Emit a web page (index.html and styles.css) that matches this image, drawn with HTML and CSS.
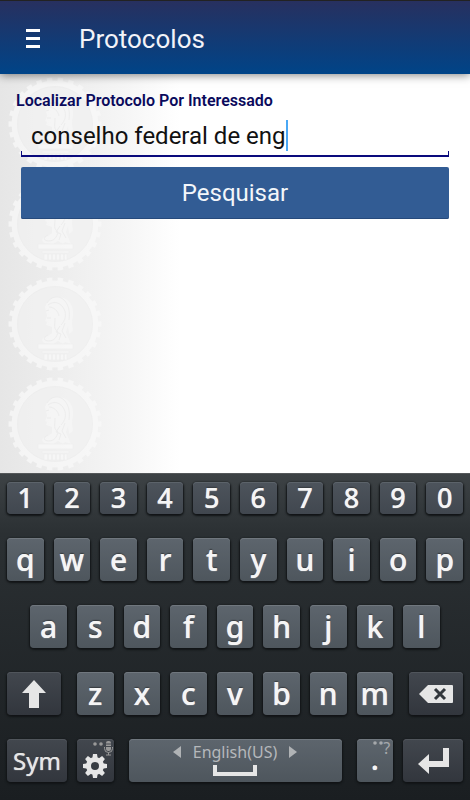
FILE: index.html
```html
<!DOCTYPE html>
<html lang="pt-BR">
<head>
    <meta charset="UTF-8">
    <meta name="viewport" content="width=device-width, initial-scale=1.0">
    <title>Protocolos</title>
    <link rel="stylesheet" href="styles.css">
</head>
<body>
    <header class="topbar">
        <button type="button" class="menu" aria-label="Menu">
            <span></span><span></span><span></span>
        </button>
        <h1>Protocolos</h1>
    </header>

    <main class="content">
        <svg class="seals" aria-hidden="true">
            <defs>
                <pattern id="seal" width="110" height="100" patternUnits="userSpaceOnUse">
                    <circle cx="55" cy="50" r="39.5" fill="#f2f2f2"/>
                    <g fill="none" stroke="#f9f9f9">
                        <circle cx="55" cy="50" r="40.5" stroke-width="6"/>
                        <circle cx="55" cy="50" r="44.5" stroke-width="4" pathLength="52" stroke-dasharray="1 1" stroke-dashoffset="0.5"/>
                    </g>
                    <circle cx="55" cy="50" r="37.5" fill="none" stroke="#efefef"/>
                    <!-- bust with helmet -->
                    <path d="M45 33c2-7 8-11 15-10 9 1 14 9 13 18l-1 8 1 8-4 3-1-8-2 6 5 12-6-2-2 2-5-3-5 3-9-1c-4-3-1-7 4-7l4-3v-6l-6-2 1-3-2-1 2-5-1-4z" fill="#f8f8f8"/>
                    <path d="M47 29c4-7 12-8 17-3 5 5 6 12 5 20M48 31c6-5 13-2 16 4 3 6 1 12-3 16M49 33c5 0 9 4 10 9M46 37l3-1M47 44h4M55 44c0 8-2 10 3 14M60 52l-4 6 5 2-2 6M65 49l-3 8 4 7M48 61c-5 2-5 6 1 6 5 0 8-4 9-9" fill="none" stroke="#ededed"/>
                    <path d="M38 70h35v5H38zM42 77h27v2H42zM44 80h23v6H44z" fill="#fafafa" stroke="#eee" stroke-width=".6"/>
                    <path d="M48 80v6M52 80v6M56 80v6M60 80v6M64 80v6" stroke="#eaeaea"/>
                </pattern>
            </defs>
            <rect width="110" height="100%" fill="url(#seal)"/>
        </svg>

        <form class="search">
            <label for="interessado">Localizar Protocolo Por Interessado</label>
            <div class="field">
                <input type="text" id="interessado" name="interessado" value="conselho federal de eng" autocomplete="off">
                <span class="caret"></span>
            </div>
            <button type="submit" class="submit">Pesquisar</button>
        </form>
    </main>

    <section class="keyboard" aria-label="Teclado">
        <div class="row numbers">
            <button type="button" class="key">1</button>
            <button type="button" class="key">2</button>
            <button type="button" class="key">3</button>
            <button type="button" class="key">4</button>
            <button type="button" class="key">5</button>
            <button type="button" class="key">6</button>
            <button type="button" class="key">7</button>
            <button type="button" class="key">8</button>
            <button type="button" class="key">9</button>
            <button type="button" class="key">0</button>
        </div>
        <div class="row">
            <button type="button" class="key">q</button>
            <button type="button" class="key">w</button>
            <button type="button" class="key">e</button>
            <button type="button" class="key">r</button>
            <button type="button" class="key">t</button>
            <button type="button" class="key">y</button>
            <button type="button" class="key">u</button>
            <button type="button" class="key">i</button>
            <button type="button" class="key">o</button>
            <button type="button" class="key">p</button>
        </div>
        <div class="row home">
            <button type="button" class="key">a</button>
            <button type="button" class="key">s</button>
            <button type="button" class="key">d</button>
            <button type="button" class="key">f</button>
            <button type="button" class="key">g</button>
            <button type="button" class="key">h</button>
            <button type="button" class="key">j</button>
            <button type="button" class="key">k</button>
            <button type="button" class="key">l</button>
        </div>
        <div class="row">
            <button type="button" class="key dark wide shift" aria-label="Shift">
                <svg width="26" height="30" viewBox="0 0 26 30"><path d="M13 1L25 14H18V29H8V14H1z"/></svg>
            </button>
            <button type="button" class="key">z</button>
            <button type="button" class="key">x</button>
            <button type="button" class="key">c</button>
            <button type="button" class="key">v</button>
            <button type="button" class="key">b</button>
            <button type="button" class="key">n</button>
            <button type="button" class="key">m</button>
            <button type="button" class="key dark wide backspace" aria-label="Apagar">
                <svg width="36" height="20" viewBox="0 0 36 20"><path d="M1 10L10 1H34Q35 1 35 2V18Q35 19 34 19H10z"/><path class="cross" d="M17 5l10 10M27 5L17 15"/></svg>
            </button>
        </div>
        <div class="row">
            <button type="button" class="key dark wide sym">Sym</button>
            <button type="button" class="key dark settings" aria-label="Configurações">
                <svg class="hint" width="20" height="15" viewBox="-2 0 20 15">
                    <circle cx="0" cy="3" r="1.8"/><circle cx="6" cy="3" r="1.8"/>
                    <rect x="11" y="0" width="5" height="10" rx="2"/>
                    <path class="line" d="M9.5 6v1.5a4 4 0 0 0 8 0V6M13.500 11.500V14M11 14h5"/>
                    <path class="grill" d="M11 3h5M11 5.500h5"/>
                </svg>
                <svg class="gear" width="26" height="26" viewBox="-13 -13 26 26">
                    <circle r="6.500" fill="none" stroke="#e6e6e6" stroke-width="5"/>
                    <g id="teeth"><path d="M-2-12h4l.8 5h-5.600zM-2 12h4l.8-5h-5.600zM-12-2v4l5 .8v-5.600zM12-2v4l-5 .8v-5.600z"/></g>
                    <use href="#teeth" transform="rotate(45)"/>
                </svg>
            </button>
            <button type="button" class="key space">
                <span class="language">
                    <svg width="8" height="12" viewBox="0 0 8 12"><path d="M8 0V12L0 6z"/></svg>
                    English(US)
                    <svg width="8" height="12" viewBox="0 0 8 12"><path d="M0 0V12L8 6z"/></svg>
                </span>
                <svg class="bar" width="44" height="12" viewBox="0 0 44 12"><path d="M0 0h4v7h36V0h4v11H0z"/></svg>
            </button>
            <button type="button" class="key period"><span class="more"><svg width="10" height="4" viewBox="0 0 10 4"><circle cx="2" cy="2" r="1.8"/><circle cx="8" cy="2" r="1.8"/></svg>?</span>.</button>
            <button type="button" class="key dark wide" aria-label="Enter">
                <svg width="32" height="28" viewBox="0 0 32 28"><path d="M1 17L12 7V14H26V1H32V20H12V27z"/></svg>
            </button>
        </div>
    </section>
</body>
</html>
```
FILE: styles.css
```css
* {
    box-sizing: border-box;
}
body {
    margin: 0;
    min-height: 100vh;
    display: flex;
    flex-direction: column;
    font-family: Roboto, sans-serif;
    background-color: white;
}
button, input {
    font-family: inherit;
    border: 0;
    padding: 0;
    margin: 0;
}

/* top bar */
.topbar {
    display: flex;
    align-items: center;
    gap: 39px;
    height: 74px;
    padding: 2px 26px 0;
    border-top: 1px solid #222;
    background: linear-gradient(#27305f, #004488);
    box-shadow: 0 1px 9px rgba(0, 0, 0, 0.5);
    position: relative;
    z-index: 1;
}
.menu {
    display: flex;
    flex-direction: column;
    gap: 5px;
    width: 14px;
    background: none;
}
.menu span {
    height: 3px;
    background-color: white;
}
h1 {
    margin: 0;
    font-size: 26px;
    font-weight: 400;
    color: #f3f3f8;
}

/* search form */
.content {
    flex: 1;
    position: relative;
    background: linear-gradient(to right, #e6e6e6, #ededed 60px, #f5f5f5 120px, white 180px);
}
.seals {
    position: absolute;
    top: 0;
    left: 0;
    width: 110px;
    height: 100%;
    opacity: 0.75;
}
.search {
    position: relative;
    display: flex;
    flex-direction: column;
    padding: 17px 21px 20px;
}
.search label {
    margin-left: -5px;
    font-size: 16px;
    line-height: 20px;
    font-weight: 600;
    color: #0a0a5c;
}
.field {
    display: flex;
    align-items: center;
    height: 46px;
    padding: 5px 10px 0;
    margin-bottom: 10px;
    border-bottom: 2px solid #0a0a7c;
    position: relative;
}
.field::before, .field::after {
    content: "";
    position: absolute;
    bottom: 0;
    width: 1px;
    height: 4px;
    background-color: #0a0a7c;
}
.field::before {
    left: 0;
}
.field::after {
    right: 0;
}
.field input {
    field-sizing: content;
    max-width: 100%;
    height: 36px;
    font-size: 24px;
    color: #111;
    background: none;
    outline: none;
}
.caret {
    width: 2px;
    height: 31px;
    background-color: #4aa8f5;
}
.submit {
    height: 52px;
    font-size: 24px;
    color: #f3f6fa;
    background-color: #325c94;
    border-radius: 2px;
    box-shadow: inset 0 -1px #264a7c;
}

/* keyboard */
.keyboard {
    display: flex;
    flex-direction: column;
    gap: 24px;
    padding: 8px 7px 18px;
    border-top: 1px solid #55585a;
    background: linear-gradient(#3d4245, #2b3033 60px, #1a1e21);
    font-family: "Noto Sans", sans-serif;
}
.row {
    display: grid;
    grid-template-columns: repeat(20, 1fr);
    gap: 10px;
}
.key {
    grid-column: span 2;
    display: flex;
    align-items: center;
    justify-content: center;
    min-width: 0;
    height: 43px;
    font-size: 30px;
    line-height: 40px;
    font-weight: 500;
    color: #f5f5f5;
    text-shadow: 0 0 1px #f5f5f5, 0 -1px 1px #22272b;
    background: linear-gradient(#5d656d, #4e565d);
    border-radius: 4px;
    box-shadow: inset 0 1px #70777e, 0 1px 2px 1px #111416;
    position: relative;
}
.key svg {
    fill: #e6e6e6;
}
.numbers .key {
    height: 32px;
    font-size: 27px;
    line-height: 32px;
    background: linear-gradient(#4d545c, #41474f);
    box-shadow: inset 0 1px #5c636a, 0 1px 2px 1px #111416;
}
.home .key:first-child {
    grid-column: 2 / span 2;
}
.dark {
    background: linear-gradient(#42474e, #32363d);
    box-shadow: inset 0 1px #50555b, 0 1px 2px 1px #111416;
}
.wide {
    grid-column: span 3;
}
.shift {
    margin-right: 6px;
}
.backspace {
    margin-left: 6px;
}
.backspace .cross {
    stroke: #32373c;
    stroke-width: 3;
}
.sym {
    font-size: 24px;
    font-weight: 400;
    color: #e6e6e6;
}
.settings {
    align-items: flex-end;
    padding-bottom: 3px;
}
.key .hint {
    position: absolute;
    top: 2px;
    right: 1px;
    fill: #999;
}
.hint .line {
    fill: none;
    stroke: #999;
}
.hint .grill {
    stroke: #42474e;
}
.space {
    grid-column: span 10;
    flex-direction: column;
    justify-content: flex-start;
    gap: 3px;
    margin: 0 5px;
    padding-top: 3px;
}
.language {
    display: flex;
    align-items: center;
    gap: 12px;
    font-size: 16px;
    line-height: 20px;
    font-weight: 400;
    color: #b5b8bb;
    text-shadow: none;
}
.language svg {
    fill: #b0b3b5;
}
.period {
    padding-bottom: 4px;
}
.more {
    position: absolute;
    top: 2px;
    right: 3px;
    display: flex;
    font-size: 16px;
    line-height: 15px;
    font-weight: 400;
    color: #a5a8ab;
    text-shadow: none;
}
.key .more svg {
    fill: #a5a8ab;
}
```
